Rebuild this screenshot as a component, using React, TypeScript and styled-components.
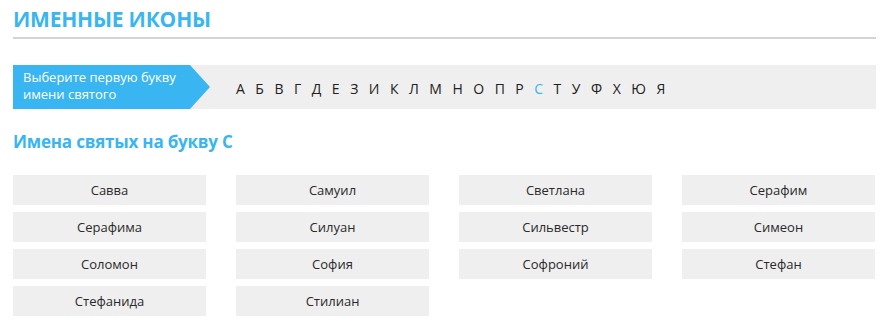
import React from 'react';
import styled, { createGlobalStyle } from 'styled-components';

const letters = ['А', 'Б', 'В', 'Г', 'Д', 'Е', 'З', 'И', 'К', 'Л', 'М', 'Н', 'О', 'П', 'Р', 'С', 'Т', 'У', 'Ф', 'Х', 'Ю', 'Я'];

const names = [
  'Савва', 'Самуил', 'Светлана', 'Серафим',
  'Серафима', 'Силуан', 'Сильвестр', 'Симеон',
  'Соломон', 'София', 'Софроний', 'Стефан',
  'Стефанида', 'Стилиан',
];

const GlobalStyle = createGlobalStyle`
  body {
    margin: 0;
    background: #fff;
    font-family: 'Open Sans', 'Noto Sans', sans-serif;
  }
`;

const Page = styled.div`
  width: 863px;
  padding: 0 11px 0 13px;
`;

const Title = styled.h1`
  margin: 0;
  padding-top: 5px;
  height: 32px;
  font-size: 21px;
  font-weight: 700;
  line-height: 28px;
  color: #39b6f1;
  letter-spacing: -0.2px;
  border-bottom: 2px solid #d4d4d4;
`;

const LetterBar = styled.div`
  margin-top: 26px;
  height: 44px;
  background: #efefef;
  display: flex;
  align-items: center;
`;

const Prompt = styled.div`
  width: 197px;
  height: 44px;
  box-sizing: border-box;
  padding: 4px 0 0 10px;
  background: #39b6f1;
  color: #fff;
  font-size: 13px;
  line-height: 17px;
  clip-path: polygon(0 0, 177px 0, 197px 22px, 177px 44px, 0 44px);
`;

const Letters = styled.div`
  display: flex;
  gap: 10.5px;
  margin-left: 26px;
  margin-top: 2px;
`;

const Letter = styled.span<{ $active?: boolean }>`
  font-size: 14px;
  color: ${(p) => (p.$active ? '#39b6f1' : '#222')};
  cursor: pointer;
`;

const Subtitle = styled.h2`
  margin: 21px 0 0;
  font-size: 17px;
  font-weight: 700;
  line-height: 24px;
  color: #39b6f1;
  letter-spacing: -0.2px;
`;

const Grid = styled.div`
  margin-top: 21px;
  display: grid;
  grid-template-columns: repeat(4, 193px);
  column-gap: 30px;
  row-gap: 7px;
`;

const NameCell = styled.div`
  height: 30px;
  background: #efefef;
  display: flex;
  align-items: center;
  justify-content: center;
  font-size: 13px;
  color: #2a2a2a;
`;

const App = () => {
  return (
    <Page>
      <GlobalStyle />
      <Title>ИМЕННЫЕ ИКОНЫ</Title>
      <LetterBar>
        <Prompt>
          Выберите первую букву
          <br />
          имени святого
        </Prompt>
        <Letters>
          {letters.map((l) => (
            <Letter key={l} $active={l === 'С'}>
              {l}
            </Letter>
          ))}
        </Letters>
      </LetterBar>
      <Subtitle>Имена святых на букву С</Subtitle>
      <Grid>
        {names.map((n) => (
          <NameCell key={n}>{n}</NameCell>
        ))}
      </Grid>
    </Page>
  );
};

export default App;
